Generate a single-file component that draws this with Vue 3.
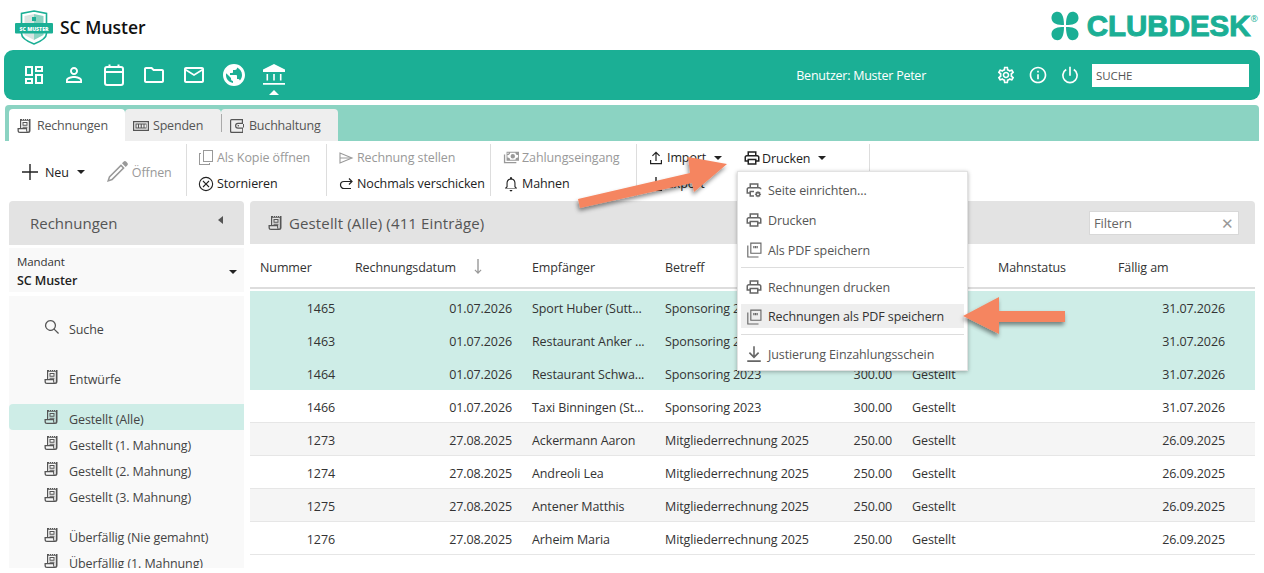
<script setup>
const navIcons = ['i-dash', 'i-person', 'i-cal', 'i-folder', 'i-mail', 'i-globe', 'i-bank']

const sideItems = [
  { label: 'Entwürfe', cls: 'mt-entw' },
  { label: 'Gestellt (Alle)', cls: 'mt-gest active' },
  { label: 'Gestellt (1. Mahnung)' },
  { label: 'Gestellt (2. Mahnung)' },
  { label: 'Gestellt (3. Mahnung)' },
  { label: 'Überfällig (Nie gemahnt)', cls: 'mt-ueber' },
  { label: 'Überfällig (1. Mahnung)' },
]

const rows = [
  { nr: 1465, date: '01.07.2026', to: 'Sport Huber (Sutt...', subject: 'Sponsoring 2023', amount: '300.00', due: '31.07.2026', cls: 'sel' },
  { nr: 1463, date: '01.07.2026', to: 'Restaurant Anker ...', subject: 'Sponsoring 2023', amount: '300.00', due: '31.07.2026', cls: 'sel' },
  { nr: 1464, date: '01.07.2026', to: 'Restaurant Schwa...', subject: 'Sponsoring 2023', amount: '300.00', due: '31.07.2026', cls: 'sel' },
  { nr: 1466, date: '01.07.2026', to: 'Taxi Binningen (St...', subject: 'Sponsoring 2023', amount: '300.00', due: '31.07.2026', cls: '' },
  { nr: 1273, date: '27.08.2025', to: 'Ackermann Aaron', subject: 'Mitgliederrechnung 2025', amount: '250.00', due: '26.09.2025', cls: 'odd' },
  { nr: 1274, date: '27.08.2025', to: 'Andreoli Lea', subject: 'Mitgliederrechnung 2025', amount: '250.00', due: '26.09.2025', cls: '' },
  { nr: 1275, date: '27.08.2025', to: 'Antener Matthis', subject: 'Mitgliederrechnung 2025', amount: '250.00', due: '26.09.2025', cls: 'odd' },
  { nr: 1276, date: '27.08.2025', to: 'Arheim Maria', subject: 'Mitgliederrechnung 2025', amount: '250.00', due: '26.09.2025', cls: '' },
]

const menu = [
  { label: 'Seite einrichten...', icon: 'i-printset' },
  { label: 'Drucken', icon: 'i-print' },
  { label: 'Als PDF speichern', icon: 'i-pdf', sep: true },
  { label: 'Rechnungen drucken', icon: 'i-print' },
  { label: 'Rechnungen als PDF speichern', icon: 'i-pdf', hover: true, sep: true },
  { label: 'Justierung Einzahlungsschein', icon: 'i-download' },
]
</script>

<template>
  <div class="page">
    <svg class="sprite" xmlns="http://www.w3.org/2000/svg">
      <symbol id="i-dash" viewBox="0 0 24 24"><path d="M19 5v2h-4V5h4M9 5v6H5V5h4m10 8v6h-4v-6h4M9 17v2H5v-2h4M21 3h-8v6h8V3zM11 3H3v10h8V3zm10 8h-8v10h8V11zm-10 4H3v6h8v-6z" /></symbol>
      <symbol id="i-person" viewBox="0 0 24 24"><path d="M12 5.9c1.16 0 2.1.94 2.1 2.1s-.94 2.1-2.1 2.1S9.9 9.16 9.9 8s.94-2.1 2.1-2.1m0 9c2.97 0 6.1 1.46 6.1 2.1v1.1H5.9V17c0-.64 3.13-2.1 6.1-2.1M12 4C9.79 4 8 5.79 8 8s1.79 4 4 4 4-1.79 4-4-1.79-4-4-4zm0 9c-2.67 0-8 1.34-8 4v3h16v-3c0-2.66-5.33-4-8-4z" /></symbol>
      <symbol id="i-cal" viewBox="0 0 24 24"><rect x="3" y="4" width="18" height="18" rx="2" fill="none" stroke="currentColor" stroke-width="2" /><path d="M3 9h18M7.500 1.500V5M16.500 1.500V5" fill="none" stroke="currentColor" stroke-width="2" /></symbol>
      <symbol id="i-folder" viewBox="0 0 24 24"><path d="M20 6h-8l-2-2H4c-1.1 0-1.99.9-1.99 2L2 18c0 1.1.9 2 2 2h16c1.1 0 2-.9 2-2V8c0-1.1-.9-2-2-2zm0 12H4V6h5.17l2 2H20v10z" /></symbol>
      <symbol id="i-mail" viewBox="0 0 24 24"><path d="M20 4H4c-1.1 0-1.99.9-1.99 2L2 18c0 1.1.9 2 2 2h16c1.1 0 2-.9 2-2V6c0-1.1-.9-2-2-2zm0 14H4V8l8 5 8-5v10zm-8-7L4 6h16l-8 5z" /></symbol>
      <symbol id="i-globe" viewBox="0 0 24 24"><path d="M12 1C5.900 1 1 5.900 1 12s4.900 11 11 11 11-4.900 11-11S18.100 1 12 1zm-1 18.930c-3.950-.490-7-3.850-7-7.930 0-.620.080-1.210.210-1.790L9 15v1c0 1.100.900 2 2 2v1.930zm6.900-2.540c-.260-.810-1-1.390-1.900-1.390h-1v-3c0-.550-.450-1-1-1H8v-2h2c.550 0 1-.450 1-1V7h2c1.100 0 2-.900 2-2v-.410c2.930 1.190 5 4.060 5 7.410 0 2.080-.800 3.970-2.100 5.390z" /></symbol>
      <symbol id="i-bank" viewBox="0 0 24 24"><path d="M12 1 1 6.500V9h22V6.500L12 1zM4.500 11v6.500h1.600V11H4.500zm6.700 0v6.500h1.600V11h-1.600zm6.700 0v6.500h1.600V11h-1.600zM1 20v1.800h22V20H1z" /></symbol>
      <symbol id="i-gear" viewBox="0 0 24 24"><path d="M19.430 12.980c.040-.320.070-.640.070-.980 0-.340-.030-.660-.070-.980l2.110-1.650c.190-.150.240-.420.120-.640l-2-3.460c-.090-.160-.260-.250-.440-.250-.060 0-.120.010-.170.030l-2.490 1c-.520-.400-1.080-.730-1.690-.980l-.380-2.650C14.460 2.180 14.250 2 14 2h-4c-.250 0-.460.180-.490.420l-.380 2.650c-.610.250-1.170.590-1.690.980l-2.490-1c-.060-.020-.120-.030-.180-.030-.170 0-.340.090-.430.250l-2 3.460c-.130.220-.070.490.120.640l2.110 1.650c-.040.320-.070.650-.070.980 0 .330.030.660.070.980l-2.110 1.650c-.190.150-.240.420-.12.640l2 3.460c.090.160.260.250.440.250.060 0 .120-.010.170-.030l2.490-1c.520.400 1.080.730 1.690.980l.380 2.650c.030.240.240.420.490.420h4c.250 0 .460-.180.490-.420l.380-2.650c.610-.250 1.170-.590 1.690-.980l2.490 1c.060.020.120.030.180.030.170 0 .340-.090.430-.250l2-3.460c.120-.220.070-.490-.120-.640l-2.110-1.650zm-1.980-1.710c.040.310.050.520.050.730 0 .210-.020.430-.050.730l-.140 1.130.890.700 1.080.84-.700 1.210-1.270-.510-1.040-.420-.900.680c-.430.320-.840.560-1.250.730l-1.060.43-.160 1.130-.200 1.350h-1.400l-.190-1.350-.160-1.130-1.060-.43c-.430-.180-.830-.410-1.230-.710l-.910-.700-1.060.43-1.270.510-.700-1.210 1.080-.84.890-.700-.140-1.130c-.030-.310-.050-.540-.050-.740s.020-.430.050-.730l.140-1.130-.890-.700-1.080-.84.700-1.210 1.270.510 1.040.42.900-.68c.430-.32.840-.56 1.250-.73l1.060-.43.160-1.130.200-1.350h1.390l.190 1.350.160 1.130 1.060.43c.430.180.830.410 1.230.71l.91.700 1.060-.43 1.270-.51.700 1.210-1.070.85-.89.700.140 1.130zM12 8c-2.210 0-4 1.790-4 4s1.790 4 4 4 4-1.790 4-4-1.790-4-4-4zm0 6c-1.100 0-2-.900-2-2s.900-2 2-2 2 .900 2 2-.900 2-2 2z" /></symbol>
      <symbol id="i-info" viewBox="0 0 24 24"><path d="M11 7h2v2h-2zm0 4h2v6h-2zm1-9C6.480 2 2 6.480 2 12s4.480 10 10 10 10-4.480 10-10S17.520 2 12 2zm0 18c-4.410 0-8-3.590-8-8s3.590-8 8-8 8 3.590 8 8-3.590 8-8 8z" /></symbol>
      <symbol id="i-power" viewBox="0 0 24 24"><path d="M11 2h2v11h-2zM17.200 4.600l-1.200 1.700a7.500 7.500 0 1 1-8 0L6.800 4.600a9.500 9.500 0 1 0 10.400 0z" /></symbol>
      <symbol id="i-invoice" viewBox="0 0 16 16"><path d="M4 1h1v.7h1V1h1v.7h1V1h1v.7h1V1h1v.7h1V1h1.500v11.500a2.500 2.500 0 0 1-2.500 2.500H3a2.500 2.500 0 0 1-2.500-2.500V10H3V1h1zm.200 1.800V10h6v2.500c0 .6.200 1 .6 1.300.6-.1 1-.6 1-1.300V2.800H4.200zM1.800 11.200v1.300c0 .7.500 1.300 1.200 1.300h6.700a3 3 0 0 1-.6-1.300v-1.300H1.800zM5.500 4h5v3.800h-5V4zm1 1v1.800h3V5h-3zm-1 3.800h5v.9h-5v-.9z" /></symbol>
      <symbol id="i-plus" viewBox="0 0 16 16"><path d="M7.300 0h1.400v7.300H16v1.400H8.700V16H7.300V8.700H0V7.300h7.300z" /></symbol>
      <symbol id="i-pencil" viewBox="0 0 22 22"><path d="M17.500.8a2 2 0 0 1 2.800 0l.9.900a2 2 0 0 1 0 2.800l-1.500 1.500L16 2.300 17.500.800zM15 3.300 18.700 7 6.500 19.200 1 21l1.800-5.500L15 3.300zm0 2.200L4.200 16.300l-.9 2.400 2.400-.9L16.500 7 15 5.500z" /></symbol>
      <symbol id="i-copy" viewBox="0 0 16 16"><path d="M5 0h10v12H5V0zm1 1v10h8V1H6zM1 3h2v1H2v10h9v-1h1v2H1V3z" /></symbol>
      <symbol id="i-cancel" viewBox="0 0 16 16"><path d="M8 .8a7.200 7.200 0 1 1 0 14.400A7.200 7.200 0 0 1 8 .8zm0 1.100a6.100 6.100 0 1 0 0 12.200A6.100 6.100 0 0 0 8 1.900zM5.400 4.600 8 7.200l2.600-2.600.8.800L8.800 8l2.600 2.600-.8.800L8 8.800l-2.600 2.600-.8-.8L7.200 8 4.600 5.400z" /></symbol>
      <symbol id="i-send" viewBox="0 0 16 16"><path d="M2 3v10l12-5L2 3z" fill="none" stroke="currentColor" stroke-width="1.100" /><path d="M2 8h11" fill="none" stroke="currentColor" stroke-width="1" /></symbol>
      <symbol id="i-resend" viewBox="0 0 16 16"><path d="M11 2.500 14 5.500 11 8.500M14 5.500H6a3.500 3.500 0 0 0 0 7h7" fill="none" stroke="currentColor" stroke-width="1.200" /></symbol>
      <symbol id="i-money" viewBox="0 0 18 16"><path d="M4 1h14v10H4V1zm1 1v1.500A1.500 1.500 0 0 0 6.500 2H5zm3 0a2.500 2.500 0 0 1-3 2.500v3A2.500 2.500 0 0 1 8 10h6a2.500 2.500 0 0 1 3-2.500v-3A2.500 2.500 0 0 1 14 2H8zm3 1.500a2.500 2.500 0 1 1 0 5 2.500 2.500 0 0 1 0-5zM1 4h1.500v8.500H15V14H1V4z" /></symbol>
      <symbol id="i-bell" viewBox="0 0 16 16"><path d="M8 1a1 1 0 0 1 1 1v.6c2.200.5 3.500 2.300 3.500 4.400v3.500l1.500 1.500v.5H2v-.5l1.500-1.500V7c0-2.100 1.300-3.900 3.500-4.400V2a1 1 0 0 1 1-1zm0 2.500C6 3.500 4.600 5 4.600 7v4l-.8.900h8.400l-.8-.9V7c0-2-1.400-3.500-3.400-3.500zM6.600 14h2.800a1.400 1.400 0 0 1-2.800 0z" /></symbol>
      <symbol id="i-upload" viewBox="0 0 16 16"><path d="M8 1.500 12 5.500l-.8.800L8.600 3.700V11H7.400V3.700L4.800 6.300 4 5.500l4-4zM2 10h1.200v3h9.600v-3H14v4.200H2V10z" /></symbol>
      <symbol id="i-download" viewBox="0 0 16 16"><path d="M7.300 1h1.400v8.200l2.900-2.900 1 1L8 11.900 3.400 7.300l1-1 2.900 2.900V1zM2 13.500h12V15H2z" /></symbol>
      <symbol id="i-print" viewBox="0 0 24 24"><path d="M19 8h-1V3H6v5H5c-1.660 0-3 1.340-3 3v6h4v4h12v-4h4v-6c0-1.660-1.340-3-3-3zM8 5h8v3H8V5zm8 12v2H8v-4h8v2zm2-2v-2H6v2H4v-4c0-.550.450-1 1-1h14c.550 0 1 .450 1 1v4h-2z" /></symbol>
      <symbol id="i-printset" viewBox="0 0 24 24"><path d="M19 8h-1V3H6v5H5c-1.660 0-3 1.340-3 3v6h4v4h6v-2H8v-4h4v-2H6v2H4v-4c0-.550.450-1 1-1h14c.550 0 1 .450 1 1h2c0-1.660-1.340-3-3-3zM8 5h8v3H8V5z" /><path d="M18 13.500l.4 1.300 1.200-.5 1 1-.6 1.200 1.400.4v1.400l-1.400.4.600 1.200-1 1-1.200-.6-.4 1.400h-1.400l-.4-1.400-1.200.6-1-1 .6-1.200-1.400-.4v-1.400l1.400-.4-.6-1.200 1-1 1.200.5.400-1.300H18zm-.7 3a1.300 1.300 0 1 0 0 2.600 1.300 1.300 0 0 0 0-2.600z" /></symbol>
      <symbol id="i-pdf" viewBox="0 0 24 24"><path d="M7 2h15v15H7V2zm1.500 1.500v12h12v-12h-12zM3 6h1.500v14.500H18V22H3V6z" /><path d="M11 6.500h1.600v3H11zm2.200 0h1.600v3h-1.600zm2.200 0h1.600v3h-1.600z" /></symbol>
      <symbol id="i-search" viewBox="0 0 16 16"><path d="M6.500 1a5.500 5.500 0 0 1 4.300 8.900l4.200 4.200-.9.900-4.200-4.200A5.500 5.500 0 1 1 6.500 1zm0 1.200a4.300 4.300 0 1 0 0 8.600 4.300 4.300 0 0 0 0-8.600z" /></symbol>
      <symbol id="i-donate" viewBox="0 0 16 16"><path d="M0 3h16v10H0V3zm1.200 1.200v7.600h13.600V4.200H1.200zM2.500 5.500h11v5h-11v-5zm1 1v3h1.500v-3H3.500zm2.500 0v3h1.700v-3H6zm2.800 0v3h1.700v-3H8.800zm2.700 0v3H13v-3h-1.500z" /></symbol>
      <symbol id="i-wallet" viewBox="0 0 16 16"><path d="M2.500 1H14v14H2.500A1.500 1.500 0 0 1 1 13.500v-11A1.500 1.500 0 0 1 2.500 1zm.1 1.200a.5.500 0 0 0-.4.500v10.600c0 .3.200.5.500.5h10.500v-3H9a3 3 0 0 1 0-6h3.800V2.200H2.600zM9 6a1.800 1.800 0 0 0 0 3.600h6V6H9zm.3 1a.8.800 0 1 1 0 1.600.8.800 0 0 1 0-1.600z" /></symbol>
    </svg>

    <header class="top">
      <div class="brand">
        <svg class="shield" viewBox="0 0 38 35" width="38" height="35">
          <path d="M19 1 31.500 3.500v20c0 4.500-6 8-12.500 10.500-6.500-2.500-12.500-6-12.500-10.500v-20z" fill="#fff" stroke="#1baf95" stroke-width="1.600" />
          <path d="M19 4v26l-9.500-5V6z" fill="#d9e4e1" />
          <path d="M19 4l9.500 2v19L19 30z" fill="#8bd3c2" />
          <path d="M17 7h4v4h-4z" fill="#1baf95" />
          <rect x="0" y="13" width="38" height="10.500" rx="1" fill="#1baf95" />
          <text x="19" y="20.500" text-anchor="middle" class="shield-text">SC MUSTER</text>
        </svg>
        <span class="brand-name">SC Muster</span>
      </div>
      <div class="clubdesk">
        <svg class="clover" viewBox="0 0 30 30" width="30" height="30">
          <path d="M14 14C8 14 2 13 1.500 7.500 1.300 3.500 4 .8 7.500.8 11.500.8 14 5 14 14zM16 14c6 0 12-1 12.500-6.500C28.700 3.500 26 .8 22.500.8 18.500.8 16 5 16 14zM14 16c-6 0-12 1-12.500 6.500C1.300 26.500 4 29.200 7.500 29.200 11.500 29.200 14 25 14 16zM16 16c6 0 12 1 12.500 6.500.2 4-2.500 6.700-6 6.700C18.500 29.200 16 25 16 16z" fill="#1baf95" />
        </svg>
        <span class="cd-text">CLUBDESK</span><span class="cd-r">®</span>
      </div>
    </header>

    <nav class="navbar">
      <div class="nav-icons">
        <span v-for="(icon, i) in navIcons" :key="icon" class="nav-item" :class="{ current: i === 6 }">
          <svg class="nav-svg"><use :href="'#' + icon" /></svg>
        </span>
      </div>
      <div class="nav-right">
        <span class="user">Benutzer: Muster Peter</span>
        <svg class="tool-svg"><use href="#i-gear" /></svg>
        <svg class="tool-svg"><use href="#i-info" /></svg>
        <svg class="tool-svg"><use href="#i-power" /></svg>
        <div class="search">SUCHE</div>
      </div>
    </nav>

    <div class="tabbar">
      <div class="tab on"><svg class="ico"><use href="#i-invoice" /></svg>Rechnungen</div>
      <div class="tab spenden"><svg class="ico"><use href="#i-donate" /></svg>Spenden</div>
      <div class="tab buch"><svg class="ico"><use href="#i-wallet" /></svg>Buchhaltung</div>
    </div>

    <div class="toolbar">
      <div class="tgroup g1">
        <span class="tbtn"><svg class="plus"><use href="#i-plus" /></svg>Neu<i class="caret"></i></span>
        <span class="tbtn dis open"><svg class="pencil"><use href="#i-pencil" /></svg>Öffnen</span>
      </div>
      <div class="tgroup col g2">
        <span class="tbtn dis"><svg class="ico"><use href="#i-copy" /></svg>Als Kopie öffnen</span>
        <span class="tbtn"><svg class="ico"><use href="#i-cancel" /></svg>Stornieren</span>
      </div>
      <div class="tgroup col g3">
        <span class="tbtn dis"><svg class="ico"><use href="#i-send" /></svg>Rechnung stellen</span>
        <span class="tbtn"><svg class="ico"><use href="#i-resend" /></svg>Nochmals verschicken</span>
      </div>
      <div class="tgroup col g4">
        <span class="tbtn dis"><svg class="ico"><use href="#i-money" /></svg>Zahlungseingang</span>
        <span class="tbtn"><svg class="ico"><use href="#i-bell" /></svg>Mahnen</span>
      </div>
      <div class="tgroup col g5">
        <span class="tbtn"><svg class="ico"><use href="#i-upload" /></svg>Import<i class="caret"></i></span>
        <span class="tbtn"><svg class="ico"><use href="#i-download" /></svg>Export</span>
      </div>
      <div class="tgroup col g6">
        <span class="tbtn"><svg class="print"><use href="#i-print" /></svg>Drucken<i class="caret"></i></span>
      </div>
    </div>

    <div class="body">
      <aside class="side">
        <div class="side-head">Rechnungen<i class="caret-left"></i></div>
        <div class="mandant">
          <div>
            <div class="m-label">Mandant</div>
            <div class="m-value">SC Muster</div>
          </div>
          <i class="caret"></i>
        </div>
        <div class="side-list">
          <div class="s-item s-search"><svg class="ico"><use href="#i-search" /></svg>Suche</div>
          <div v-for="item in sideItems" :key="item.label" class="s-item" :class="item.cls">
            <svg class="ico"><use href="#i-invoice" /></svg>{{ item.label }}
          </div>
        </div>
      </aside>

      <section class="main">
        <div class="main-head">
          <svg class="ico"><use href="#i-invoice" /></svg>
          <span class="main-title">Gestellt (Alle) (411 Einträge)</span>
          <div class="filter"><span>Filtern</span><span class="filter-x">✕</span></div>
        </div>
        <div class="row thead">
          <span>Nummer</span>
          <span class="th-date">Rechnungsdatum<svg class="sort" viewBox="0 0 10 20" width="10" height="20"><path d="M4.300 2h1.400v12.500l2-2 .8.800L5 17 1.500 13.300l.8-.8 2 2z" /></svg></span>
          <span>Empfänger</span>
          <span>Betreff</span>
          <span></span>
          <span></span>
          <span>Mahnstatus</span>
          <span>Fällig am</span>
        </div>
        <div class="tbody">
          <div v-for="r in rows" :key="r.nr" class="row" :class="r.cls">
            <span class="right">{{ r.nr }}</span>
            <span class="right">{{ r.date }}</span>
            <span>{{ r.to }}</span>
            <span>{{ r.subject }}</span>
            <span class="right">{{ r.amount }}</span>
            <span>Gestellt</span>
            <span></span>
            <span class="right">{{ r.due }}</span>
          </div>
        </div>
      </section>
    </div>

    <!-- Dropdown von Drucken -->
    <div class="menu">
      <template v-for="m in menu" :key="m.label">
        <div class="menu-item" :class="{ hover: m.hover }">
          <svg class="menu-ico"><use :href="'#' + m.icon" /></svg>{{ m.label }}
        </div>
        <div v-if="m.sep" class="menu-sep"></div>
      </template>
    </div>

    <!-- Pfeile aus der Anleitung -->
    <svg class="arrows" width="1264" height="573" viewBox="0 0 1264 573">
      <defs>
        <filter id="arrow-shadow" x="-20%" y="-30%" width="140%" height="170%">
          <feDropShadow dx="-1" dy="3" stdDeviation="2" flood-color="#000" flood-opacity=".45" />
        </filter>
      </defs>
      <g fill="#f58560" filter="url(#arrow-shadow)">
        <polygon points="578,199 690,173 688,157 727,164 694,192 692,183 580,208" />
        <polygon points="963,316 999,297 999,311 1065,311 1065,322 999,322 999,334" />
      </g>
    </svg>
  </div>
</template>

<style>
html,
body {
  margin: 0;
  background: #fff;
  overflow: hidden;
}
</style>

<style scoped>
.page {
  position: relative;
  width: 1264px;
  height: 573px;
  overflow: hidden;
  background: #fff;
  color: #333;
  font-family: "Open Sans", "Noto Sans", sans-serif;
  font-size: 12.5px;
  letter-spacing: -0.1px;
}

.sprite {
  display: none;
}

svg {
  fill: currentColor;
  flex: none;
}

.ico {
  width: 16px;
  height: 16px;
}

/* Kopf */
.top {
  height: 50px;
  box-sizing: border-box;
  display: flex;
  justify-content: space-between;
  align-items: center;
  padding: 4px 6px 0 15px;
}

.brand {
  display: flex;
  align-items: center;
  gap: 7px;
}

.shield-text {
  font: 800 5.2px "Open Sans", sans-serif;
  fill: #fff;
  letter-spacing: 0;
}

.brand-name {
  font-size: 17.5px;
  font-weight: 600;
  color: #111;
  letter-spacing: 0;
}

.clubdesk {
  display: flex;
  align-items: center;
  color: #1baf95;
  margin-bottom: 2px;
}

.cd-text {
  font-family: "Liberation Sans", sans-serif;
  font-weight: 700;
  font-size: 29.5px;
  letter-spacing: 0;
  margin-left: 7px;
  -webkit-text-stroke: 1px #1baf95;
}

.cd-r {
  font-size: 9px;
  align-self: flex-start;
  margin-top: 3px;
}

.navbar {
  margin: 0 4px;
  height: 50px;
  box-sizing: border-box;
  background: #1baf95;
  border-radius: 9px;
  display: flex;
  justify-content: space-between;
  align-items: center;
  padding: 0 11px 0 18px;
  color: #fff;
}

.nav-icons {
  display: flex;
  gap: 16px;
}

.nav-item {
  position: relative;
  display: block;
  width: 24px;
  height: 24px;
}

.nav-svg {
  width: 24px;
  height: 24px;
}

.nav-item.current::after {
  content: "";
  position: absolute;
  left: 7px;
  top: 27px;
  border-left: 5px solid transparent;
  border-right: 5px solid transparent;
  border-bottom: 5px solid #fff;
}

.nav-right {
  display: flex;
  align-items: center;
}

.user {
  margin-right: 70px;
  padding-top: 1px;
  letter-spacing: -0.25px;
}

.tool-svg {
  width: 20px;
  height: 20px;
  margin-right: 12px;
}

.search {
  width: 157px;
  height: 23px;
  box-sizing: border-box;
  padding: 0 4px;
  background: #fff;
  color: #555;
  font-size: 11.5px;
  line-height: 24px;
}

/* Reiter */
.tabbar {
  margin: 5px 5px 0;
  height: 36px;
  box-sizing: border-box;
  padding: 4px 0 0 4px;
  background: #8bd3c2;
  border-radius: 4px 4px 0 0;
  display: flex;
  font-size: 12.5px;
  letter-spacing: -0.2px;
}

.tab {
  position: relative;
  display: flex;
  align-items: center;
  gap: 4px;
  background: #eee;
  color: #555;
  border-radius: 4px 4px 0 0;
  box-sizing: border-box;
  padding-top: 1px;
  padding-left: 8px;
}

.tab.on {
  width: 116px;
  background: #fff;
}

.spenden {
  width: 96px;
}

.buch {
  width: 117px;
}

.buch::before {
  content: "";
  position: absolute;
  left: 0;
  top: 5px;
  height: 18px;
  border-left: 1px solid #aaa;
}

/* Werkzeugleiste */
.toolbar {
  height: 60px;
  display: flex;
  padding-left: 22px;
  color: #222;
}

.tgroup {
  display: flex;
  align-items: center;
  box-sizing: border-box;
  border-right: 1px solid #ddd;
  height: 52px;
  margin-top: 3px;
  padding-top: 4px;
}

.tgroup.col {
  flex-direction: column;
  align-items: flex-start;
  justify-content: space-between;
  padding: 5px 0 4px;
}

.g1 {
  width: 165px;
}

.g2 {
  width: 140px;
  padding-left: 11px !important;
}

.g3 {
  width: 164px;
  padding-left: 11px !important;
}

.g4 {
  width: 146px;
  padding-left: 12px !important;
}

.g5 {
  width: 106px;
  padding-left: 11px !important;
  border-right: 0;
}

.g6 {
  width: 127px;
}

.tbtn {
  display: flex;
  align-items: center;
  gap: 3px;
  white-space: nowrap;
}

.dis {
  color: #999;
}

.plus {
  width: 16px;
  height: 16px;
  margin-right: 4px;
}

.pencil {
  width: 22px;
  height: 22px;
  margin-right: 1px;
}

.open {
  margin-left: 21px;
}

.print {
  width: 18px;
  height: 18px;
  margin-right: -2px;
}

.caret {
  display: inline-block;
  width: 0;
  height: 0;
  margin-left: 5px;
  border-left: 4px solid transparent;
  border-right: 4px solid transparent;
  border-top: 4px solid #222;
}

/* Inhalt */
.body {
  display: flex;
  gap: 6px;
  padding: 0 9px;
  height: 372px;
}

.side {
  width: 235px;
  flex: none;
  display: flex;
  flex-direction: column;
}

.side-head {
  position: relative;
  height: 44px;
  flex: none;
  background: #e3e3e3;
  border-radius: 4px 4px 0 0;
  padding: 12px 0 0 21px;
  box-sizing: border-box;
  font-size: 15px;
  color: #555;
  letter-spacing: 0;
}

.caret-left {
  position: absolute;
  left: 209px;
  top: 15px;
  border-top: 4px solid transparent;
  border-bottom: 4px solid transparent;
  border-right: 5px solid #555;
}

.mandant {
  flex: none;
  height: 44px;
  margin-top: 3px;
  box-sizing: border-box;
  padding: 3px 7px 0 8px;
  background: #f9f9f9;
  display: flex;
  justify-content: space-between;
  align-items: center;
}

.m-label {
  font-size: 11.5px;
  line-height: 16px;
}

.m-value {
  font-weight: 600;
  line-height: 18px;
  margin-top: 2px;
  color: #222;
}

.side-list {
  margin-top: 4px;
  height: 272px;
  overflow: hidden;
  background: #f9f9f9;
  padding-top: 18px;
  box-sizing: border-box;
}

.s-item {
  display: flex;
  align-items: center;
  height: 26px;
  box-sizing: border-box;
  padding: 4px 0 0 35px;
  gap: 9px;
  color: #444;
  border-radius: 4px 0 0 4px;
}

.s-item .ico {
  margin-top: -4px;
  color: #555;
}

.mt-entw {
  margin-top: 24px;
}

.mt-gest {
  margin-top: 14px;
}

.mt-ueber {
  margin-top: 14px;
}

.active {
  background: #ceede7;
}

.main {
  width: 1005px;
  flex: none;
}

.main-head {
  height: 43px;
  background: #e3e3e3;
  border-radius: 4px 4px 0 0;
  display: flex;
  align-items: center;
  padding: 0 16px 0 18px;
  color: #555;
  gap: 5px;
}

.main-title {
  font-size: 15px;
  letter-spacing: 0.13px;
}

.filter {
  margin-left: auto;
  width: 150px;
  height: 24px;
  box-sizing: border-box;
  border: 1px solid #d8d8d8;
  background: #fff;
  padding: 0 4px;
  display: flex;
  justify-content: space-between;
  align-items: center;
  font-size: 13px;
  color: #666;
}

.filter-x {
  font-size: 15px;
  color: #999;
}

.row {
  display: grid;
  grid-template-columns: 95px 177px 133px 165px 82px 86px 120px 127px 20px;
  height: 33px;
  padding-top: 2px;
  align-items: center;
  box-sizing: border-box;
  background: #fff;
  color: #333;
}

.row > span {
  padding: 0 10px;
  white-space: nowrap;
}

.row .right {
  text-align: right;
}

.thead {
  height: 45px;
  padding-top: 4px;
  border-bottom: 2px solid #ddd;
  margin-bottom: 2px;
  color: #333;
}

.th-date {
  display: flex;
  align-items: center;
  gap: 17px;
}

.sort {
  color: #999;
  margin-top: -2px;
}

.row.sel {
  background: #ceede7;
}

.row.odd {
  background: #f5f5f5;
}

.row:not(.sel):not(.thead) {
  border-bottom: 1px solid #e6e6e6;
}

/* Menu */
.menu {
  position: absolute;
  left: 737px;
  top: 171px;
  width: 231px;
  height: 200px;
  box-sizing: border-box;
  display: flex;
  flex-direction: column;
  background: #fff;
  border: 1px solid #e2e2e2;
  box-shadow: 0 1px 4px rgba(0, 0, 0, .3);
  padding: 3px;
  color: #555;
}

.menu-item {
  display: flex;
  align-items: center;
  flex: none;
  height: 30px;
  padding-left: 4px;
  gap: 5px;
}

.menu-item.hover {
  height: 24px;
  box-sizing: border-box;
  margin: 2px 0 4px;
  padding-top: 1px;
  background: #eee;
  color: #333;
}

.menu-ico {
  width: 18px;
  height: 18px;
  color: #666;
}

.menu-sep {
  flex: none;
  height: 1px;
  margin: 2px 0 4px;
  background: #ddd;
}

.arrows {
  position: absolute;
  left: 0;
  top: 0;
  pointer-events: none;
}
</style>
